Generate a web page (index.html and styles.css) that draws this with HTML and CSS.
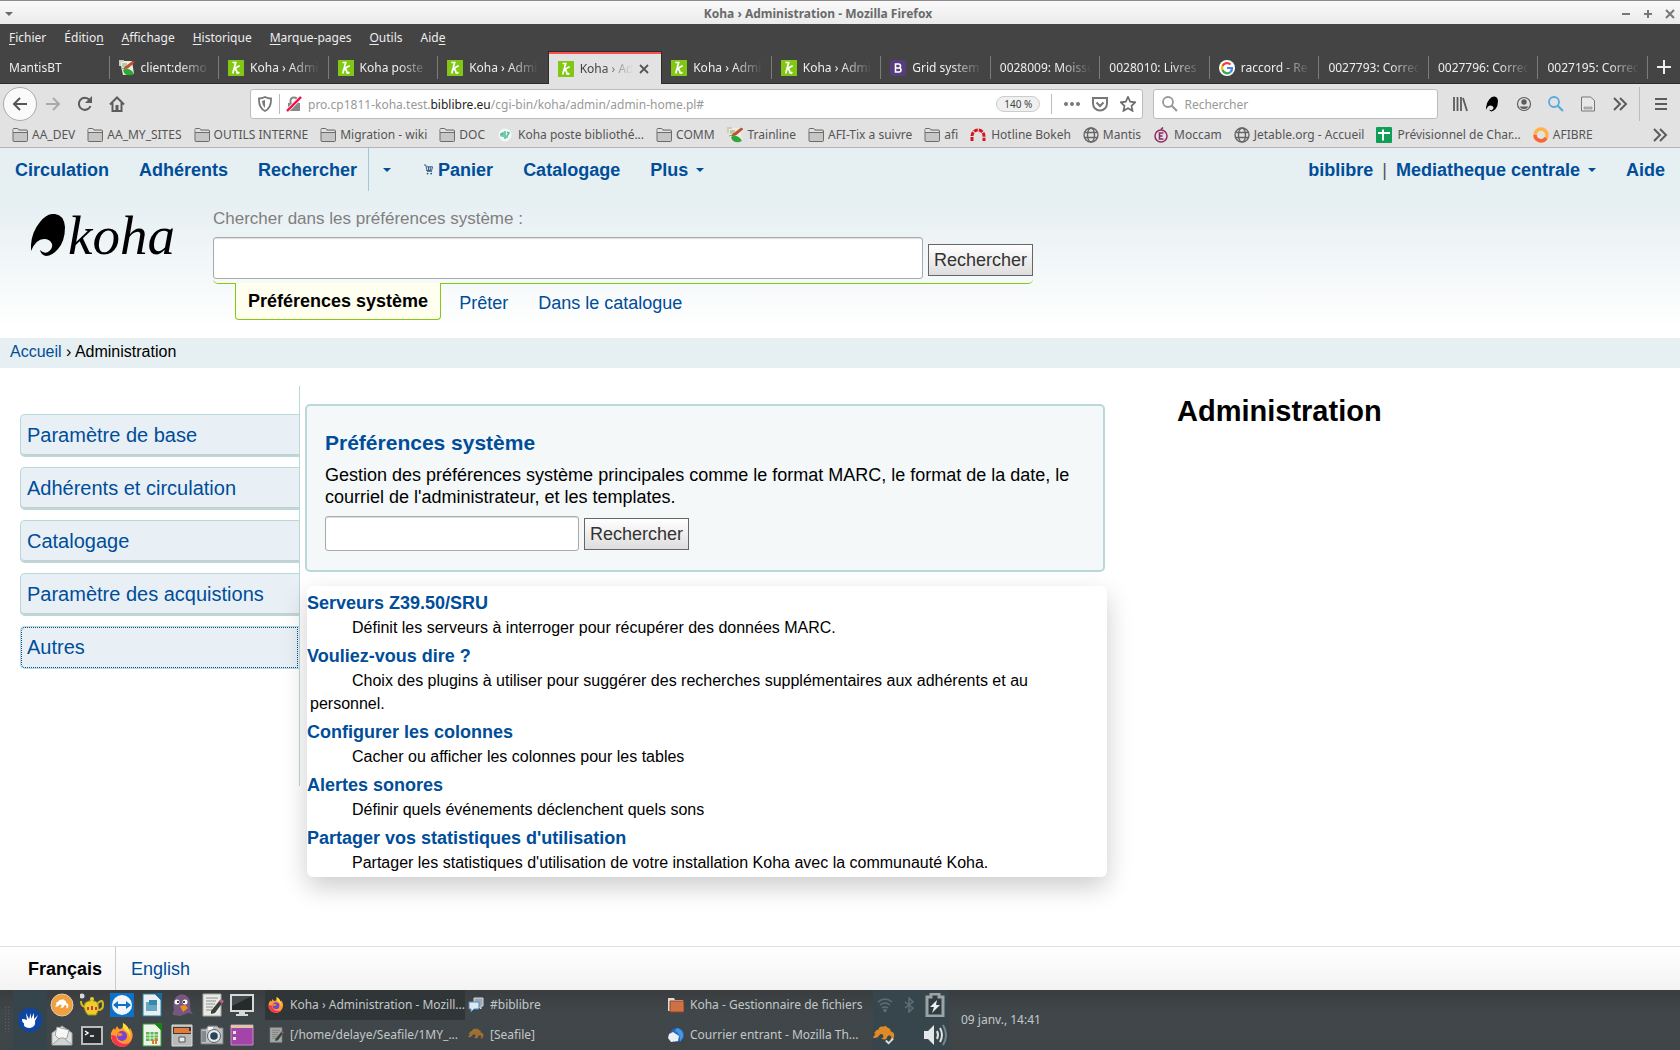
FILE: index.html
```html
<!DOCTYPE html>
<html lang="fr">
  <head>
    <meta charset="UTF-8" />
    <meta name="viewport" content="width=device-width, initial-scale=1.0" />
    <title>Koha › Administration</title>
    <link rel="stylesheet" href="styles.css">
  </head>
  <body>
    <svg class="sprite" aria-hidden="true">
      <symbol id="folder" viewBox="0 0 16 16"><path d="M1 13.5v-11q0-1 1-1h3.500q.7 0 1 .7l.4.8h7.600q1 0 1 1v9.500q0 1-1 1H2q-1 0-1-1z" fill="#c6c6c6" stroke="#6c6c6c"/><path d="M1.500 5.500V2h4l1 2h8v1.500z" fill="#e2e2e2"/><path d="M1 5.500h14" stroke="#6c6c6c"/></symbol>
      <symbol id="koha-k" viewBox="0 0 16 16"><path d="M0 0h16v16H0z" fill="#82c713"/><path d="M4.500 2.500h3.200L4.700 13.500M11.800 6.200Q10 5.500 6.500 9.500q2-.5 2.500 3.300 1 1.200 2.200-.8" fill="none" stroke="#fff" stroke-width="1.700"/></symbol>
      <symbol id="wiki" viewBox="0 0 16 16"><path d="M1 1h12l2 13-11 1z" fill="#f0eddf"/><path d="M0 0h5v2H2v4H0z" fill="#c9cfb9"/><path d="M3 4h5M3 6h4M2 9l4-1" stroke="#8c9a7c"/><path d="m6 7 8-6 2 1-7 6-4 1z" fill="#c9502b" stroke="#8f3519" stroke-width=".5"/><path d="M4 10q4-3 9 1l2 3q-6 3-10-1z" fill="#2fa83b"/></symbol>
      <symbol id="globe" viewBox="0 0 16 16"><g fill="none" stroke="#666" stroke-width="1.400"><circle cx="8" cy="8" r="7"/><ellipse cx="8" cy="8" rx="3.500" ry="7"/><path d="M1.500 5.500h13M1.500 10.500h13"/></g></symbol>
      <symbol id="chevrons" viewBox="0 0 16 16"><path d="m2 2 6 6-6 6M8 2l6 6-6 6" fill="none" stroke="#5c5c5c" stroke-width="2"/></symbol>
      <symbol id="firefox" viewBox="0 0 24 24"><path d="M13 0q5 3 6 7l1-2q4 6 2 11-3 7-10 8Q3 23 1 15 0 9 4 5l1 2 2-4 2 3q5 0 4-6z" fill="#ff9a2b"/><path d="M1 12q1 11 11 12 8-1 10-8 0 4-6 5-9 0-10-8-3-1-5-1z" fill="#f4364f"/><circle cx="12" cy="13" r="5" fill="#7543d8"/><path d="M7 10q4-1 6 2-3 2-5 1z" fill="#ff8524"/><path d="M13 0q5 3 6 7 2 4 1 8-1-5-4-7-4-2-3-8z" fill="#ffdc3d"/></symbol>
      <symbol id="bird" viewBox="0 0 24 20"><path d="M2 7Q3 4 6 4q1-4 5-3 3-2 5 1 4 1 3 4 5 1 4 6-1 4-4 4l1-4q-2-3-4-1-1 4-4 4l-3-1q3-1 2-4-2-2-4 0-2 4-7 3l3-5Q0 9 2 7z"/></symbol>
      <symbol id="notepad" viewBox="0 0 24 24"><path d="M3 1h18v22H3z" fill="#e9eae6" stroke="#a5a7a2"/><path d="M6 5h12M6 8h10M6 11h9M6 14h7M6 17h6" stroke="#8d8f8a"/><path d="m11 18 9-11 3 2-8 11-4 1z" fill="#3c3f3b"/><path d="m19 8 2-2 3 2-2 3z" fill="#b4618e"/></symbol>
      <symbol id="cart" viewBox="0 0 10 12"><path d="M0 1h2l1.500 7H9M3 3h6.500L8.500 7H3M5 3v4M7 3v4" fill="none" stroke="#234f7d"/><circle cx="4" cy="10.500" r="1" fill="#234f7d"/><circle cx="8" cy="10.500" r="1" fill="#234f7d"/></symbol>
      <symbol id="koha-mark" viewBox="0 0 34 42"><path d="M0 37Q-1 20 9 8 16-1 24 0q9 1 10 13 0 14-7 22-6 7-12 7-5-1-6-6 4 4 8 2 5-3 4-8-2-5-8-5-8 0-13 12z"/></symbol>
      <symbol id="search" viewBox="0 0 16 16"><circle cx="6" cy="6" r="5" fill="none" stroke="currentColor" stroke-width="1.800"/><path d="m9.500 9.500 5.500 5.500" stroke="currentColor" stroke-width="2.200"/></symbol>
    </svg>

    <div class="titlebar">
      <button class="win-menu" aria-label="Menu de la fenêtre"><span class="caret"></span></button>
      <span class="win-title">Koha › Administration - Mozilla Firefox</span>
      <div class="win-buttons">
        <button aria-label="Réduire"><svg width="10" height="10"><path d="M1 5h8" stroke="#777" stroke-width="2"/></svg></button>
        <button aria-label="Agrandir"><svg width="10" height="10"><path d="M1 5h8M5 1v8" stroke="#777" stroke-width="2"/></svg></button>
        <button aria-label="Fermer"><svg width="10" height="10"><path d="m1 1 8 8M9 1 1 9" stroke="#777" stroke-width="2"/></svg></button>
      </div>
    </div>

    <div class="menubar">
      <button><u>F</u>ichier</button>
      <button>Éditio<u>n</u></button>
      <button><u>A</u>ffichage</button>
      <button><u>H</u>istorique</button>
      <button><u>M</u>arque-pages</button>
      <button><u>O</u>utils</button>
      <button>Aid<u>e</u></button>
    </div>

    <div class="tabbar">
      <button class="tab"><span>MantisBT</span></button>
      <button class="tab"><svg><use href="#wiki"/></svg><span>client:demo</span></button>
      <button class="tab"><svg><use href="#koha-k"/></svg><span>Koha › Admi</span></button>
      <button class="tab"><svg><use href="#koha-k"/></svg><span>Koha poste</span></button>
      <button class="tab before-active"><svg><use href="#koha-k"/></svg><span>Koha › Admi</span></button>
      <button class="tab active"><svg><use href="#koha-k"/></svg><span>Koha › Ad</span><svg class="tab-close" viewBox="0 0 10 10"><path d="m1 1 8 8M9 1 1 9" stroke="#555" stroke-width="1.800"/></svg></button>
      <button class="tab"><svg><use href="#koha-k"/></svg><span>Koha › Admi</span></button>
      <button class="tab"><svg><use href="#koha-k"/></svg><span>Koha › Admi</span></button>
      <button class="tab"><svg viewBox="0 0 16 16"><rect width="16" height="16" rx="3" fill="#563d7c"/><path d="M5.500 4h3q2 0 2 2t-2 2h-3h3.500q2 0 2 2t-2 2H5.500z" fill="none" stroke="#fff" stroke-width="1.600"/></svg><span>Grid system</span></button>
      <button class="tab"><span>0028009: Moisso</span></button>
      <button class="tab"><span>0028010: Livres</span></button>
      <button class="tab"><svg viewBox="0 0 16 16"><circle cx="8" cy="8" r="8" fill="#fff"/><g fill="none" stroke-width="2.200"><path d="M11.500 4.500A5 5 0 0 0 3.500 6" stroke="#ea4335"/><path d="M3.500 6a5 5 0 0 0 0 4" stroke="#fbbc05"/><path d="M3.500 10a5 5 0 0 0 8 2" stroke="#34a853"/><path d="M11.500 12A5 5 0 0 0 13 8H8" stroke="#4285f4"/></g></svg><span>raccord - Re</span></button>
      <button class="tab"><span>0027793: Correc</span></button>
      <button class="tab"><span>0027796: Correc</span></button>
      <button class="tab"><span>0027195: Correc</span></button>
      <button class="new-tab" aria-label="Nouvel onglet"><svg width="14" height="14"><path d="M0 7h14M7 0v14" stroke="#eee" stroke-width="2"/></svg></button>
    </div>

    <div class="toolbar">
      <button class="tool back" aria-label="Précédent"><svg viewBox="0 0 16 16"><path d="M15 8H2M8 2 2 8l6 6" fill="none" stroke="#555" stroke-width="2"/></svg></button>
      <button class="tool" aria-label="Suivant"><svg viewBox="0 0 16 16"><path d="M1 8h13M8 2l6 6-6 6" fill="none" stroke="#aaa" stroke-width="2"/></svg></button>
      <button class="tool" aria-label="Actualiser"><svg viewBox="0 0 16 16"><path d="M12.500 4A6 6 0 1 0 13.500 10" fill="none" stroke="#5c5c5c" stroke-width="2"/><path d="M15 0v7H8z" fill="#5c5c5c"/></svg></button>
      <button class="tool" aria-label="Accueil"><svg viewBox="0 0 16 16"><path d="m1 8.500 7-7 7 7M3.500 7v8h9V7" fill="none" stroke="#5c5c5c" stroke-width="2"/><path d="M6.500 15V9h3v6z" fill="#5c5c5c"/></svg></button>

      <div class="urlbar">
        <svg viewBox="0 0 16 16"><path d="M8 1q3 1.500 6 1.500Q14.500 12 8 15 1.500 12 2 2.500 5 2.500 8 1z" fill="none" stroke="#777" stroke-width="1.800"/><path d="M8 4v8Q5 9 5 5z" fill="#777"/></svg>
        <i class="bar-sep"></i>
        <svg viewBox="0 0 16 16"><path d="M4.500 8V5q0-3.500 3.500-3.500T11.500 5v3" fill="none" stroke="#888" stroke-width="2"/><path d="M2 7h12v8H2z" fill="#888"/><path d="M1 15 15 1" stroke="#e2e2e2" stroke-width="4"/><path d="M1 15 15 1" stroke="#ff0039" stroke-width="2"/></svg>
        <span class="url">pro.cp1811-koha.test.<b>biblibre.eu</b>/cgi-bin/koha/admin/admin-home.pl#</span>
        <button class="zoom-level">140 %</button>
        <i class="bar-sep"></i>
        <button class="url-action" aria-label="Actions"><svg viewBox="0 0 16 16" fill="#777"><circle cx="2" cy="8" r="2"/><circle cx="8" cy="8" r="2"/><circle cx="14" cy="8" r="2"/></svg></button>
        <button class="url-action" aria-label="Pocket"><svg viewBox="0 0 16 16" fill="none" stroke="#777" stroke-width="2"><path d="M1 2h14v5.500a7 7 0 0 1-14 0z"/><path d="m4.500 6.500 3.500 3.500 3.500-3.500"/></svg></button>
        <button class="url-action" aria-label="Marquer cette page"><svg viewBox="0 0 16 16"><path d="m8 1 2.200 4.700 5 .6-3.700 3.500 1 5L8 12.300 3.500 14.800l1-5L.8 6.300l5-.6z" fill="none" stroke="#6c6c6c" stroke-width="1.700"/></svg></button>
      </div>

      <label class="searchbar">
        <svg><use href="#search"/></svg>
        <input type="search" placeholder="Rechercher" aria-label="Rechercher sur le Web">
      </label>

      <div class="tool-end">
        <button class="tool" aria-label="Bibliothèque"><svg viewBox="0 0 16 16"><path d="M2 1v14M5.500 1v14M9 1v14M11 2l4 13" stroke="#5c5c5c" stroke-width="1.800"/></svg></button>
        <button class="tool" aria-label="Koha"><svg class="tiny-mark"><use href="#koha-mark"/></svg></button>
        <button class="tool" aria-label="Compte"><svg viewBox="0 0 16 16"><circle cx="8" cy="8" r="6.500" fill="none" stroke="#5c5c5c" stroke-width="1.200"/><circle cx="8" cy="6" r="2.700" fill="#5c5c5c"/><path d="M3.500 10.500h9q-1.500 2.500-4.500 2.500t-4.500-2.500z" fill="#5c5c5c"/></svg></button>
        <button class="tool blue" aria-label="Zoom"><svg><use href="#search"/></svg></button>
        <button class="tool" aria-label="Lecteur"><svg viewBox="0 0 16 16"><path d="M1.500 1h9l4 3.500V15h-13z" fill="#e8e8e8" stroke="#777"/><path d="M4 11h8v2H4z" fill="#bbb" stroke="#888" stroke-width=".6"/></svg></button>
        <button class="tool" aria-label="Autres outils"><svg><use href="#chevrons"/></svg></button>
        <i class="bar-sep"></i>
        <button class="tool" aria-label="Menu"><svg viewBox="0 0 16 16"><path d="M2 3h12M2 8h12M2 13h12" stroke="#5c5c5c" stroke-width="2"/></svg></button>
      </div>
    </div>

    <div class="bookmarks">
      <a href="#"><svg><use href="#folder"/></svg>AA_DEV</a>
      <a href="#"><svg><use href="#folder"/></svg>AA_MY_SITES</a>
      <a href="#"><svg><use href="#folder"/></svg>OUTILS INTERNE</a>
      <a href="#"><svg><use href="#folder"/></svg>Migration - wiki</a>
      <a href="#"><svg><use href="#folder"/></svg>DOC</a>
      <a href="#" class="site"><svg viewBox="0 0 16 16"><circle cx="8" cy="8" r="6.500" fill="#f2faf7"/><path d="M4 9.500V7l2-1v4M8 4v8M10 5l2 1-2 3v2" fill="none" stroke="#53b79b" stroke-width="1.500"/></svg>Koha poste bibliothé...</a>
      <a href="#"><svg><use href="#folder"/></svg>COMM</a>
      <a href="#" class="site"><svg><use href="#wiki"/></svg>Trainline</a>
      <a href="#"><svg><use href="#folder"/></svg>AFI-Tix a suivre</a>
      <a href="#"><svg><use href="#folder"/></svg>afi</a>
      <a href="#" class="site"><svg viewBox="0 0 16 16"><path d="M2 14V9a6 6 0 0 1 12 0v5" fill="none" stroke="#d8141c" stroke-width="3" stroke-dasharray="4 1"/></svg>Hotline Bokeh</a>
      <a href="#"><svg><use href="#globe"/></svg>Mantis</a>
      <a href="#" class="site"><svg viewBox="0 0 16 16"><circle cx="8" cy="9" r="6" fill="none" stroke="#8c2a62" stroke-width="1.500"/><path d="M10.500 6H6.500v6h4M6.500 9h3M8 2.500 10 .5" fill="none" stroke="#8c2a62" stroke-width="1.600"/></svg>Moccam</a>
      <a href="#"><svg><use href="#globe"/></svg>Jetable.org - Accueil</a>
      <a href="#" class="site"><svg viewBox="0 0 16 16"><rect width="16" height="16" rx="1" fill="#0f9d58"/><path d="M2 6h12M7 2.500v11" stroke="#fff" stroke-width="2"/></svg>Prévisionnel de Char...</a>
      <a href="#"><svg viewBox="0 0 16 16"><circle cx="8" cy="8" r="6" fill="none" stroke="#ffb24a" stroke-width="3.500"/><path d="M2 8a6 6 0 0 0 11 3" fill="none" stroke="#f7633e" stroke-width="3.500"/></svg>AFIBRE</a>
      <button class="more" aria-label="Plus de marque-pages"><svg><use href="#chevrons"/></svg></button>
    </div>

    <header class="header">
      <nav class="top-nav">
        <a href="#">Circulation</a>
        <a href="#">Adhérents</a>
        <a href="#" class="nav-search">Rechercher</a>
        <a href="#" class="nav-toggle" aria-label="Options de recherche"><span class="caret"></span></a>
        <a href="#" class="nav-cart"><svg><use href="#cart"/></svg>Panier</a>
        <a href="#">Catalogage</a>
        <a href="#">Plus<span class="caret"></span></a>
        <div class="nav-user">
          <a href="#">biblibre<span class="bar">|</span>Mediatheque centrale<span class="caret"></span></a>
          <a href="#">Aide</a>
        </div>
      </nav>
      <div class="header-search">
        <a href="#" class="logo" aria-label="Accueil Koha"><svg><use href="#koha-mark"/></svg><span>koha</span></a>
        <div class="search-block">
          <form>
            <label for="pref">Chercher dans les préférences système :</label>
            <div class="search-row">
              <input type="text" id="pref" name="pref">
              <button type="button" class="submit">Rechercher</button>
            </div>
          </form>
          <ul class="search-tabs">
            <li class="selected"><a href="#">Préférences système</a></li>
            <li><a href="#">Prêter</a></li>
            <li><a href="#">Dans le catalogue</a></li>
          </ul>
        </div>
      </div>
    </header>

    <div class="breadcrumbs"><a href="#">Accueil</a> › Administration</div>

    <main class="main">
      <nav class="side-tabs">
        <a href="#">Paramètre de base</a>
        <a href="#">Adhérents et circulation</a>
        <a href="#">Catalogage</a>
        <a href="#">Paramètre des acquistions</a>
        <a href="#" class="focused">Autres</a>
      </nav>

      <div class="content">
        <section class="pref-box">
          <h3><a href="#">Préférences système</a></h3>
          <p><label for="syspref">Gestion des préférences système principales comme le format MARC, le format de la date, le courriel de l'administrateur, et les templates.</label></p>
          <div class="pref-row">
            <input type="text" id="syspref" name="syspref">
            <button type="button" class="submit">Rechercher</button>
          </div>
        </section>

        <dl class="panel">
          <dt><a href="#">Serveurs Z39.50/SRU</a></dt>
          <dd>Définit les serveurs à interroger pour récupérer des données MARC.</dd>
          <dt><a href="#">Vouliez-vous dire ?</a></dt>
          <dd>Choix des plugins à utiliser pour suggérer des recherches supplémentaires aux adhérents et au personnel.</dd>
          <dt><a href="#">Configurer les colonnes</a></dt>
          <dd>Cacher ou afficher les colonnes pour les tables</dd>
          <dt><a href="#">Alertes sonores</a></dt>
          <dd>Définir quels événements déclenchent quels sons</dd>
          <dt><a href="#">Partager vos statistiques d'utilisation</a></dt>
          <dd>Partager les statistiques d'utilisation de votre installation Koha avec la communauté Koha.</dd>
        </dl>
      </div>

      <h1>Administration</h1>
    </main>

    <footer class="languages">
      <span class="current">Français</span>
      <a href="#">English</a>
    </footer>

    <div class="taskbar">
      <i class="grip"></i>
      <button class="start" aria-label="Menu des applications"><svg viewBox="0 0 24 24"><circle cx="12" cy="12" r="12" fill="#0f46a3"/><path d="M4 11q3 0 5 1L8 5l3 6 2-6v6l3-6v6l4-4-3 6q1 6-5 7-7 0-6-5-2 0-2-4z" fill="#fff"/></svg></button>
      <div class="launchers">
        <button aria-label="Seafile"><svg viewBox="0 0 24 24"><circle cx="12" cy="12" r="11" fill="#f2a03d" stroke="#d9cdb8"/><use href="#bird" x="5" y="6" width="14" height="12" fill="#fff"/></svg></button>
        <button aria-label="Thé"><svg viewBox="0 0 24 24"><path d="M5 10q7-5 13 0 2 7-2 12H8q-5-5-3-12z" fill="#e8cf2e" stroke="#a58d10"/><path d="M18 10q5-5 5 2 0 5-5 5M5 14q-4-1-4-6" fill="none" stroke="#d6ba20" stroke-width="2"/><circle cx="12" cy="6" r="2" fill="#e8cf2e"/><circle cx="2" cy="3" r="2.500" fill="#d8dadb"/><path d="M8 14v3M12 13v4M16 14v3" stroke="#d93535" stroke-width="2"/></svg></button>
        <button aria-label="TeamViewer"><svg viewBox="0 0 24 24"><path d="M0 0h24v24H0z" fill="#0d71c8"/><circle cx="12" cy="12" r="10" fill="#f3f6f8"/><path d="m3 12 5-4v3h8V8l5 4-5 4v-3H8v3z" fill="#0d71c8"/></svg></button>
        <button aria-label="LibreOffice"><svg viewBox="0 0 24 24"><path d="M3 1h12l6 6v16H3z" fill="#e9f0f3" stroke="#2982ab"/><path d="M15 0h7v8z" fill="#176d9b"/><path d="M6 9h11v9H6z" fill="#66a7c3"/><path d="M9 7h8v5H9z" fill="#3789b2"/></svg></button>
        <button aria-label="Pidgin"><svg viewBox="0 0 24 24"><path d="M3 22q-1-2 1-5-2-9 3-14 6-4 11 1 3 4 2 10 0 4 3 7l-5-1-8 3z" fill="#76577f"/><circle cx="7" cy="9" r="2.500" fill="#fff"/><circle cx="15" cy="9" r="2.500" fill="#fff"/><circle cx="8" cy="9" r="1"/><circle cx="14" cy="9" r="1"/><path d="m10 13 5-1 3 3-5 4z" fill="#ef8d25"/></svg></button>
        <button aria-label="Éditeur"><svg><use href="#notepad"/></svg></button>
        <button aria-label="Bureau"><svg viewBox="0 0 24 24"><path d="M1 2h22v16H1z" fill="#252a2b" stroke="#d7d9d8" stroke-width="2"/><path d="M2 3h20L2 13z" fill="#454a4b"/><path d="M9 19h6v2h3v2H6v-2h3z" fill="#d7d9d8"/></svg></button>
        <button aria-label="Courriel"><svg viewBox="0 0 24 24"><path d="m2 10 10-7 10 7v12H2z" fill="#e0e3e1" stroke="#a3a7a5"/><path d="m5 12 2-8 12 3-2 8-6 3z" fill="#f6f7f6" stroke="#9ca09e"/><path d="m2 22 8-7h4l8 7" fill="#cfd2d0" stroke="#9ca09e"/></svg></button>
        <button aria-label="Terminal"><svg viewBox="0 0 24 24"><path d="M2 4h20v17H2z" fill="#292d2f" stroke="#b9bcba" stroke-width="2"/><path d="m5 8 3 2-3 2M10 13h4" fill="none" stroke="#fff" stroke-width="1.500"/></svg></button>
        <button aria-label="Firefox"><svg><use href="#firefox"/></svg></button>
        <button aria-label="Calc"><svg viewBox="0 0 24 24"><path d="M3 1h12l6 6v16H3z" fill="#edf5eb" stroke="#35a12f"/><path d="M15 0h7v8z" fill="#15860f"/><path d="M6 9h12v9H6z" fill="#5cb751"/><path d="M6 12h12M6 15h12M10 9v9M14 9v9" stroke="#e5f3e1"/><path d="M13 21v-4M16 21v-6" stroke="#e67628" stroke-width="2"/></svg></button>
        <button aria-label="Archives"><svg viewBox="0 0 24 24"><path d="M2 2h20v21H2z" fill="#b9bbb9" stroke="#dadcda"/><path d="M3 4h18v7H3z" fill="#3f3832"/><path d="M4 5h15v3h2v2H4z" fill="#e57a3d"/><path d="M9 14h6v5H9z" fill="#e8e9e8" stroke="#555"/></svg></button>
        <button aria-label="Capture"><svg viewBox="0 0 24 24"><path d="M1 6h5l2-3h9l2 2h4v16H1z" fill="#bcc0c1" stroke="#777c7e"/><path d="M8 4h5v3H8z" fill="#f4f4f4"/><circle cx="14" cy="13" r="6.500" fill="#e8eaea" stroke="#5b6062"/><circle cx="14" cy="13" r="3.800" fill="#29435e"/><path d="M2 8h4v11H2z" fill="#85898b"/></svg></button>
        <button aria-label="Fenêtre"><svg viewBox="0 0 24 24"><path d="M1 2h22v20H1z" fill="#a443a8" stroke="#c78dc9"/><path d="M1 2h22v3H1z" fill="#d8c8a8"/><path d="M3 8h3v3H3zM3 14h3v3H3z" fill="#e6e2e6"/></svg></button>
      </div>
      <div class="tasks">
        <button class="task current"><svg><use href="#firefox"/></svg><span>Koha › Administration - Mozill...</span></button>
        <button class="task"><svg viewBox="0 0 16 16"><path d="M6 1h9v8h-2v3l-3-3H6z" fill="#9aa8b7" stroke="#d3dae1"/><path d="M1 5h10v7H6l-3 3v-3H1z" fill="#dce9f5" stroke="#5787b6"/></svg><span>#biblibre</span></button>
        <button class="task"><svg viewBox="0 0 16 16"><path d="M0 1h6l1 2h8v11H0z" fill="#dedad5"/><path d="M2 4h14v11H2z" fill="#cc7246" stroke="#99451f"/></svg><span>Koha - Gestionnaire de fichiers</span></button>
        <button class="task min"><svg><use href="#notepad"/></svg><span>[/home/delaye/Seafile/1MY_...</span></button>
        <button class="task min"><svg fill="#e08a25"><use href="#bird"/></svg><span>[Seafile]</span></button>
        <button class="task"><svg viewBox="0 0 16 16"><circle cx="9" cy="8" r="7" fill="#2567bb"/><path d="M9 1q7 2 6 9l-3 5q1-8-5-11z" fill="#4398e0"/><path d="m1 7 4-2 6 4-1 5-7 1-3-4z" fill="#eaf0f5"/></svg><span>Courrier entrant - Mozilla Th...</span></button>
      </div>
      <div class="tray">
        <svg class="dim" viewBox="0 0 16 16" fill="none" stroke="#8a9699" stroke-width="1.500"><path d="M1 5q7-6 14 0M3 8q5-4 10 0M5 11q3-2 6 0"/><circle cx="8" cy="13.500" r="1"/></svg>
        <svg class="dim" viewBox="0 0 16 16" fill="none" stroke="#8a9699" stroke-width="1.500"><path d="m4 5 8 6-4 4V1l4 4-8 6"/></svg>
        <svg class="big" viewBox="0 0 24 24"><path d="M4 4h4V1h8v3h4v19H4z" fill="#2f3c42" stroke="#9ba3a5" stroke-width="3"/><path d="m14 7-7 7h4l-2 6 8-8h-4z" fill="#eef0f0"/></svg>
        <svg class="wide" viewBox="0 0 24 20"><use href="#bird" fill="#e08a25"/><path d="m14 16 3 3 5-5" fill="none" stroke="#ddd" stroke-width="2"/></svg>
        <svg class="big" viewBox="0 0 24 24"><path d="M1 8h4l6-6v20l-6-6H1z" fill="#e4e8e8"/><path d="M14 8q2 4 0 8M17 5q4 7 0 14" fill="none" stroke="#dde2e2" stroke-width="2"/><path d="M20 2q6 10 0 20" fill="none" stroke="#76848a" stroke-width="2"/></svg>
      </div>
      <time class="clock">09 janv., 14:41</time>
    </div>
  </body>
</html>
```
FILE: styles.css
```css
* {
  box-sizing: border-box;
}

body {
  margin: 0;
  min-height: 100vh;
  display: flex;
  flex-direction: column;
  font-family: "Liberation Sans", Arial, sans-serif;
  font-size: 18px;
  line-height: 22px;
  color: #000;
  background-color: #fff;
}

a {
  color: #004d99;
  text-decoration: none;
}

button,
input {
  font: inherit;
  color: inherit;
}

button {
  background: none;
  border: 0;
  padding: 0;
  white-space: nowrap;
}

svg {
  display: block;
  width: 16px;
  height: 16px;
  flex: none;
}

.sprite {
  position: absolute;
  width: 0;
  height: 0;
}

.caret {
  display: inline-block;
  border: 4px solid transparent;
  border-top-color: currentColor;
  border-bottom: 0;
  vertical-align: middle;
}

/* Browser window */

.titlebar,
.menubar,
.tabbar,
.toolbar,
.bookmarks,
.taskbar {
  display: flex;
  align-items: center;
  font-family: "Noto Sans", sans-serif;
  font-size: 12px;
  line-height: 16px;
}

.titlebar {
  height: 24px;
  padding: 2px 5px 0;
  border-top: 1px solid #8e8b8e;
  background: linear-gradient(#f9f9f9, #ebebeb);
  color: #6a6a6a;
}

.win-menu {
  width: 16px;
  display: flex;
}

.win-title {
  flex: 1;
  text-align: center;
  font-weight: bold;
}

.win-buttons {
  width: 60px;
  display: flex;
  justify-content: flex-end;
  gap: 12px;
}

.win-buttons svg {
  width: 10px;
  height: 10px;
}

.menubar {
  height: 27px;
  padding-left: 9px;
  gap: 18px;
  background-color: #444;
  color: #eee;
}

.menubar u {
  text-underline-offset: 2px;
}

.tabbar {
  height: 33px;
  align-items: stretch;
  background-color: #444;
  color: #eee;
  border-bottom: 1px solid #2c2c2c;
}

.tab {
  position: relative;
  flex: 1;
  min-width: 0;
  display: flex;
  align-items: center;
  gap: 6px;
  padding: 2px 9px 0;
}

.tab::after {
  content: "";
  position: absolute;
  right: 0;
  top: 5px;
  bottom: 4px;
  border-right: 1px solid #7c7c7c;
}

.tab.active::after,
.tab.before-active::after {
  display: none;
}

.tab span {
  flex: 1;
  overflow: hidden;
  text-align: left;
  mask-image: linear-gradient(to left, transparent, #000 30px);
}

.tab.active {
  margin-bottom: -1px;
  padding-right: 12px;
  border: 1px solid #2c2c2c;
  border-bottom: 0;
  background-color: #e2e2e2;
  box-shadow: inset 0 2px #f9514b;
  color: #444;
}

.tab .tab-close {
  width: 10px;
  height: 10px;
}

.new-tab {
  width: 32px;
  display: flex;
  align-items: center;
  justify-content: center;
}

.new-tab svg {
  width: 14px;
  height: 14px;
}

.toolbar {
  height: 40px;
  padding: 0 3px;
  background-color: #e2e2e2;
}

.tool {
  width: 32px;
  height: 34px;
  display: flex;
  align-items: center;
  justify-content: center;
}

.tool.back {
  width: 34px;
  border: 1px solid #aaa;
  border-radius: 50%;
  background-color: #fafafa;
}

.tool.blue {
  color: #5ba7de;
}

.tool .tiny-mark {
  width: 12px;
}

.urlbar,
.searchbar {
  height: 30px;
  display: flex;
  align-items: center;
  border: 1px solid #bcbcbc;
  border-radius: 3px;
  background-color: #fff;
}

.urlbar {
  flex: 1;
  min-width: 0;
  margin-left: 117px;
  padding: 0 6px;
  gap: 6px;
}

.bar-sep {
  align-self: stretch;
  margin: 4px 0;
  border-left: 1px solid #bcbcbc;
}

.url {
  flex: 1;
  padding-top: 1px;
  overflow: hidden;
  white-space: nowrap;
  color: #999;
}

.url b {
  font-weight: normal;
  color: #222;
}

.zoom-level {
  height: 16px;
  padding: 0 7px;
  margin-right: 5px;
  border: 1px solid #ccc;
  border-radius: 8px;
  background-color: #f0f0f0;
  font-size: 10px;
  line-height: 14px;
  color: #444;
}

.url-action {
  margin-left: 6px;
}

.searchbar {
  width: 17%;
  margin-left: 10px;
  padding: 0 8px;
  gap: 6px;
  color: #999;
}

.searchbar input {
  flex: 1;
  min-width: 0;
  border: 0;
  padding: 1px 0 0;
  outline: 0;
  background: none;
}

.searchbar input::placeholder {
  color: #999;
}

.tool-end {
  display: flex;
  margin-left: 6px;
}

.tool-end .bar-sep {
  margin: 0 5px 0 3px;
}

.bookmarks {
  height: 24px;
  padding: 0 12px 2px;
  gap: 12px;
  border-bottom: 1px solid #b5b5b5;
  background-color: #e2e2e2;
}

.bookmarks a {
  display: flex;
  align-items: center;
  gap: 4px;
  white-space: nowrap;
  color: #555;
}

.bookmarks .site {
  gap: 5px;
}

.more {
  margin-left: auto;
}

/* Koha header */

.header {
  background: linear-gradient(#e6eff2 52px, #fff 180px);
  padding-bottom: 18px;
}

.top-nav {
  height: 43px;
  display: flex;
  align-items: stretch;
  background-color: #e6eff2;
  border-radius: 3px;
  font-weight: bold;
}

.top-nav a {
  display: flex;
  align-items: center;
  padding: 0 15px;
}

.top-nav a .caret {
  margin-left: 8px;
}

.top-nav .nav-search {
  padding-right: 11px;
  border-right: 1px solid #a3c8d1;
}

.top-nav .nav-toggle {
  padding: 0 18px 0 6px;
}

.nav-cart svg {
  width: 9px;
  height: 11px;
  margin-right: 5px;
}

.nav-user {
  display: flex;
  margin-left: auto;
}

.nav-user .bar {
  margin: 0 9px;
  font-weight: normal;
  color: #555;
}

.header-search {
  display: flex;
}

.logo {
  width: 213px;
  padding: 23px 0 0 31px;
  display: flex;
  align-items: flex-start;
  gap: 3px;
  color: #000;
}

.logo svg {
  width: 34px;
  height: 42px;
}

.logo span {
  font-family: "Liberation Serif", "Times New Roman", serif;
  font-style: italic;
  font-size: 55px;
  line-height: 44px;
}

.search-block {
  width: 49%;
  max-width: 820px;
  padding-top: 17px;
}

.search-block label {
  display: block;
  margin-bottom: 7px;
  font-size: 17px;
  color: #7f7f7f;
}

.search-row,
.pref-row {
  display: flex;
  gap: 5px;
}

.search-row {
  align-items: flex-end;
  padding-bottom: 4px;
  border-bottom: 1px solid #85ca11;
  border-radius: 0 0 5px 5px;
}

.search-row input,
.pref-row input {
  height: 42px;
  padding: 3px 6px;
  border: 1px solid #aaa;
  border-radius: 3px;
  background-color: #fff;
  box-shadow: inset 0 1px 1px #ddd;
}

.search-row input {
  flex: 1;
  min-width: 0;
}

.submit {
  height: 32px;
  padding: 0 5px;
  border: 1px solid #666;
  background: linear-gradient(#fff, #ddd);
  color: #333;
}

.search-row .submit {
  margin-bottom: 3px;
}

.search-tabs {
  display: flex;
  align-items: stretch;
  list-style: none;
  margin: -1px 0 0;
  padding: 0 0 0 22px;
}

.search-tabs li {
  padding: 9px 15px 6px;
}

.search-tabs .selected {
  margin-right: 3px;
  padding: 7px 12px;
  border: 1px solid #85ca11;
  border-top: 0;
  border-radius: 0 0 4px 4px;
  background-color: #fffff0;
  font-weight: bold;
}

.search-tabs .selected a {
  color: #000;
}

.breadcrumbs {
  padding: 3px 10px 5px;
  background-color: #e6eff2;
  font-size: 16px;
}

/* Administration */

.main {
  flex: 1;
  display: grid;
  grid-template-columns: 10fr 27fr 19fr;
  align-items: start;
  padding: 18px 0 30px;
}

.side-tabs {
  min-height: 400px;
  padding: 28px 0 0 20px;
  border-right: 1px solid #b9d8d9;
}

.side-tabs a {
  display: block;
  margin-bottom: 10px;
  padding: 10px 6px 9px;
  border: 1px solid #b9d8d9;
  border-right: 0;
  border-bottom-width: 2px;
  border-radius: 5px 0 0 5px;
  background-color: #e8f0f6;
  box-shadow: inset 0 -1px #ccc;
  font-size: 20px;
  line-height: 21px;
}

.side-tabs .focused {
  border-bottom-width: 1px;
  padding-bottom: 10px;
  box-shadow: none;
  outline: 1px dotted #004d99;
  outline-offset: -2px;
}

.content {
  padding: 18px 5px 0;
}

.pref-box {
  padding: 25px 18px 19px;
  border: 2px solid #b9d8d9;
  border-radius: 5px;
  background-color: #f4f8f9;
}

.pref-box h3 {
  margin: 0 0 9px;
  font-size: 21px;
  line-height: 24px;
}

.pref-box p {
  margin: 0 0 8px;
}

.pref-row {
  align-items: center;
}

.pref-row input {
  width: 254px;
  height: 35px;
}

.panel {
  margin: 14px -2px 0 2px;
  padding: 6px 0 3px;
  border-radius: 6px;
  background-color: #fff;
  box-shadow: 0 10px 26px rgba(0, 0, 0, 0.2);
}

.panel dt {
  font-weight: bold;
}

.panel dd {
  margin: 2px 0 6px;
  padding: 0 40px 0 3px;
  text-indent: 42px;
  font-size: 16px;
  line-height: 23px;
}

.panel dd:last-child {
  margin-bottom: 0;
}

h1 {
  margin: 8px 0 0 67px;
  font-size: 29px;
  line-height: 34px;
}

.languages {
  display: flex;
  border-top: 1px solid #e0e0e0;
  background: linear-gradient(#fff, #f3f3f3);
}

.languages > * {
  padding: 11px 15px 10px;
}

.languages .current {
  padding: 11px 13px 10px 28px;
  border-right: 1px solid #ccc;
  font-weight: bold;
}

/* Desktop panel */

.taskbar {
  height: 60px;
  background: linear-gradient(#3a3d3f, #40474a 40%, #3f4547);
  color: #c3c8c9;
}

.grip {
  width: 5px;
  height: 28px;
  margin: 0 4px;
  background: radial-gradient(#566063 1px, transparent 1px) 0 0 / 3px 3px;
}

.start {
  width: 34px;
  height: 60px;
  padding: 0 5px;
  background-color: #35454b;
}

.start svg {
  width: 24px;
  height: 24px;
}

.launchers {
  display: grid;
  grid-template-columns: repeat(7, 30px);
  grid-auto-rows: 30px;
  margin: 0 8px 0 0;
}

.launchers button {
  display: grid;
  place-items: center;
}

.launchers svg {
  width: 24px;
  height: 24px;
}

.tasks {
  display: grid;
  grid-template-columns: 200px 200px 208px;
  grid-auto-rows: 30px;
}

.task {
  display: flex;
  align-items: center;
  gap: 6px;
  padding: 0 3px;
}

.task.current {
  background-color: #303537;
}

.task.min svg {
  opacity: 0.6;
}

.tray {
  width: 76px;
  height: 60px;
  display: grid;
  grid-template-columns: 24px 24px 28px;
  grid-auto-rows: 30px;
  place-items: center;
  background-color: #37464d;
}

.tray .dim {
  opacity: 0.5;
}

.tray .big {
  width: 24px;
  height: 24px;
}

.tray .wide {
  width: 22px;
  height: 20px;
  grid-column: 1 / 3;
  justify-self: start;
}

.clock {
  margin-left: 12px;
}
```
